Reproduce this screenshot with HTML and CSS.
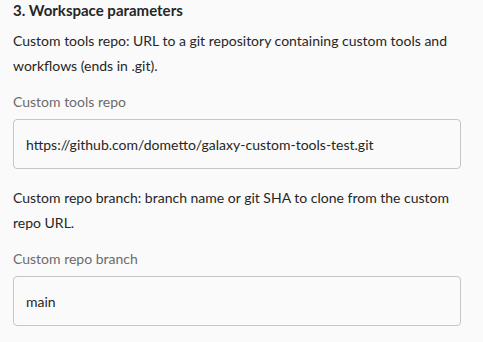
FILE: index.html
```html
<!doctype html>
<html lang="en">
    <head>
        <meta charset="UTF-8" />
        <meta name="viewport" content="width=device-width, initial-scale=1.0" />
        <title>Workspace parameters</title>
        <link rel="stylesheet" href="styles.css">
    </head>
    <body>
        <div class="section">
            <h3 class="section-title">3. Workspace parameters</h3>

            <div class="field">
                <p class="field-help">
                    Custom tools repo: URL to a git repository containing custom tools and
                    workflows (ends in .git).
                </p>
                <label class="field-label" for="toolsRepo">Custom tools repo</label>
                <input
                    type="text"
                    id="toolsRepo"
                    class="field-input"
                    value="https://github.com/dometto/galaxy-custom-tools-test.git"
                />
            </div>

            <div class="field">
                <p class="field-help">
                    Custom repo branch: branch name or git SHA to clone from the custom
                    repo URL.
                </p>
                <label class="field-label" for="repoBranch">Custom repo branch</label>
                <input type="text" id="repoBranch" class="field-input" value="main" />
            </div>
        </div>
    </body>
</html>
```

FILE: styles.css
```css
* {
    margin: 0;
    padding: 0;
    box-sizing: border-box;
}

body {
    font-family: Lato, "Noto Sans", sans-serif;
    font-size: 14px;
    line-height: 1.6;
    background: #fafafa;
    color: #262626;
}

.section {
    width: 448px;
    margin-left: 13px;
}

.section-title {
    font-size: 15px;
    font-weight: 700;
    line-height: 20px;
    color: #262626;
}

.field {
    margin-top: 8px;
}

.field + .field {
    margin-top: 16px;
}

.field-help {
    line-height: 25px;
}

.field-label {
    display: block;
    margin-top: 13px;
    color: #6b6b6b;
    line-height: 22px;
}

.field-input {
    display: block;
    width: 100%;
    height: 50px;
    margin-top: 6px;
    padding: 0 12px;
    border: 1px solid #c6c6c6;
    border-radius: 4px;
    background: #fafafa;
    font-family: inherit;
    font-size: 14px;
    color: #262626;
}
```
